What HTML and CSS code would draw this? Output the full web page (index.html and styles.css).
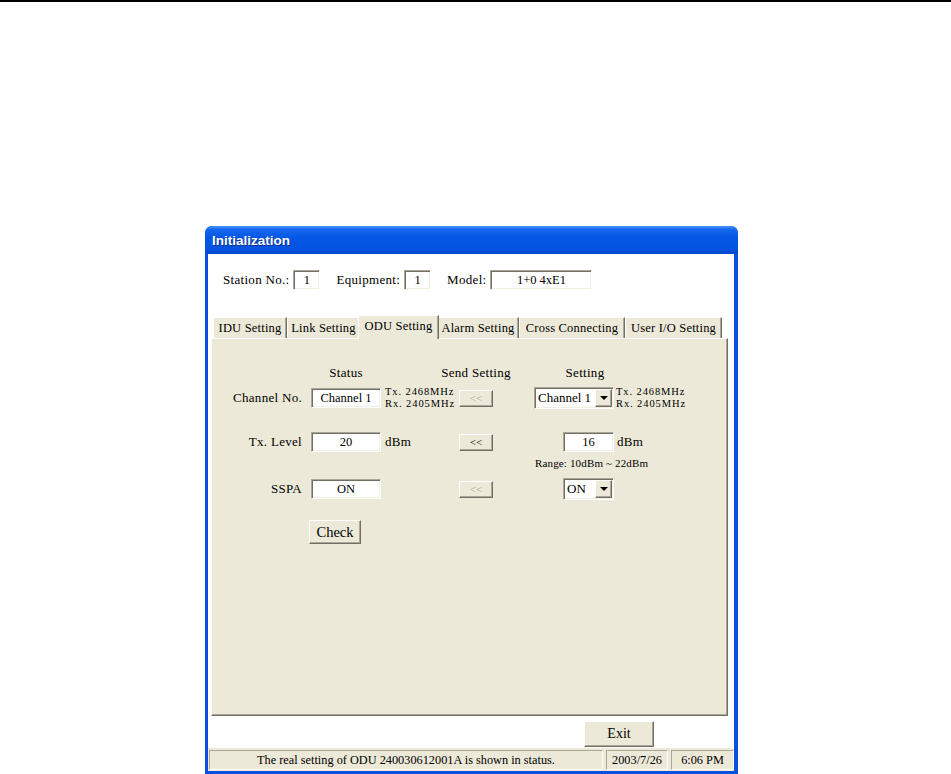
FILE: index.html
```html
<html>

<head>
	<title>Initialization</title>
	<link rel="stylesheet" href="styles.css">
</head>
<body>
	<div class="topline"></div>

	<div class="window">
		<div class="titlebar">Initialization</div>

		<div class="client">
			<div class="ids">
				<span class="lbl">Station No.:</span><span class="field f-station">1</span>
				<span class="lbl">Equipment:</span><span class="field f-equip">1</span>
				<span class="lbl">Model:</span><span class="field f-model">1+0 4xE1</span>
			</div>

			<div class="tabctl">
				<div class="tabs">
					<div class="tab t-idu">IDU Setting</div>
					<div class="tab t-link">Link Setting</div>
					<div class="tab t-odu active">ODU Setting</div>
					<div class="tab t-alarm">Alarm Setting</div>
					<div class="tab t-cross">Cross Connecting</div>
					<div class="tab t-user">User I/O Setting</div>
				</div>

				<div class="panel">
					<div class="heads">
						<div class="h-status">Status</div>
						<div class="h-send">Send Setting</div>
						<div class="h-setting">Setting</div>
					</div>

					<div class="row r-channel">
						<div class="cell-lbl">Channel No.</div>
						<div class="field sbox">Channel 1</div>
						<div class="info freq">Tx. 2468MHz<br>Rx. 2405MHz</div>
						<div class="btn send disabled">&lt;&lt;</div>
						<div class="set">
							<div class="combo c-channel"><span class="combo-text">Channel 1</span><span class="drop"></span></div>
						</div>
						<div class="after freq">Tx. 2468MHz<br>Rx. 2405MHz</div>
					</div>

					<div class="row r-level">
						<div class="cell-lbl">Tx. Level</div>
						<div class="field sbox">20</div>
						<div class="info">dBm</div>
						<div class="btn send">&lt;&lt;</div>
						<div class="set">
							<div class="field setbox">16</div>
						</div>
						<div class="after unit">dBm</div>
					</div>
					<div class="range">Range: 10dBm ~ 22dBm</div>

					<div class="row r-sspa">
						<div class="cell-lbl">SSPA</div>
						<div class="field sbox">ON</div>
						<div class="info"></div>
						<div class="btn send disabled">&lt;&lt;</div>
						<div class="set">
							<div class="combo c-on"><span class="combo-text">ON</span><span class="drop"></span></div>
						</div>
					</div>

					<div class="btn check">Check</div>
				</div>
			</div>

			<div class="foot">
				<div class="btn exit">Exit</div>
			</div>

			<div class="statusbar">
				<div class="sb sb-main">The real setting of ODU 240030612001A is shown in status.</div>
				<div class="sb sb-date">2003/7/26</div>
				<div class="sb sb-time">6:06 PM</div>
			</div>
		</div>
	</div>
</body>
</html>
```

FILE: styles.css
```css
body{
	margin: 0;
	background-color: #fff;
	font-family: "Liberation Serif", "Times New Roman", serif;
	font-size: 13px;
	color: #000;
}

.topline{
	height: 2px;
	background-color: #000;
}

/* window frame */
.window{
	width: 533px;
	height: 548px;
	margin: 224px 0 0 205px;
	background-color: #0b4fdc;
	border-radius: 7px 7px 0 0;
	display: flex;
	flex-direction: column;
	overflow: hidden;
}

.titlebar{
	height: 28px;
	flex: none;
	padding-left: 7px;
	line-height: 30px;
	color: #fff;
	font-family: "Liberation Sans", Arial, sans-serif;
	font-weight: bold;
	font-size: 13.5px;
	background: linear-gradient(to bottom, #4a95fa 0%, #1667ef 12%, #0558e6 40%, #0254e0 80%, #0348cf 100%);
	text-shadow: 1px 1px 0 #0a2e8c;
}

.client{
	flex: 1;
	margin: 0 4px 3px 3px;
	background-color: #fff;
	display: flex;
	flex-direction: column;
}

/* sunken text box */
.field{
	box-sizing: border-box;
	background-color: #fff;
	border-top: 1px solid #aca899;
	border-left: 1px solid #aca899;
	border-bottom: 1px solid #fff;
	border-right: 1px solid #fff;
	box-shadow: inset 1px 1px 0 #716f64, inset -1px -1px 0 #f1efe2;
	text-align: center;
	font-size: 12.5px;
	letter-spacing: 0;
}

/* raised button */
.btn{
	box-sizing: border-box;
	background-color: #ece9d8;
	border: 1px solid;
	border-color: #fff #716f64 #716f64 #fff;
	box-shadow: inset -1px -1px 0 #aca899;
	text-align: center;
}

.btn.disabled{
	color: #aca899;
}

.ids{
	display: flex;
	align-items: center;
	height: 20px;
	padding: 16px 0 0 15px;
	letter-spacing: 0.3px;
}

.ids .lbl{
	margin-right: 4px;
}

.ids .field{
	height: 20px;
	line-height: 18px;
	margin-right: 16px;
}

.f-station, .f-equip{
	width: 27px;
}

.f-model{
	width: 102px;
}

/* tabs */
.tabctl{
	margin: 24px 6px 0 3px;
}

.tabs{
	display: flex;
	align-items: flex-end;
	height: 24px;
	padding-left: 2px;
}

.tab{
	box-sizing: border-box;
	height: 21px;
	border-top: 1px solid #fff;
	border-left: 1px solid #fff;
	border-right: 1px solid #716f64;
	box-shadow: inset -1px 0 0 #aca899;
	background-color: #ece9d8;
	text-align: center;
	line-height: 20px;
	font-size: 12.5px;
	letter-spacing: 0.2px;
	white-space: nowrap;
}

.t-idu{ width: 74px; }
.t-link{ width: 73px; }
.t-alarm{ width: 82px; }
.t-cross{ width: 106px; }
.t-user{ width: 97px; }

.tab.active{
	width: 81px;
	height: 24px;
	margin: 0 -2px -1px;
	line-height: 20px;
	position: relative;
	z-index: 1;
}

.panel{
	box-sizing: border-box;
	height: 378px;
	background-color: #ece9d8;
	border-top: 1px solid #fff;
	border-left: 1px solid #fff;
	border-right: 1px solid #716f64;
	border-bottom: 1px solid #716f64;
	box-shadow: inset -1px -1px 0 #aca899;
	padding-top: 27px;
	letter-spacing: 0.3px;
}

.heads{
	display: flex;
	height: 14px;
	line-height: 14px;
	text-align: center;
}

.h-status{
	margin-left: 99px;
	width: 70px;
}

.h-send{
	margin-left: 56px;
	width: 78px;
	white-space: nowrap;
}

.h-setting{
	margin-left: 40px;
	width: 60px;
}

.row{
	display: flex;
	align-items: center;
}

.r-channel{
	height: 22px;
	margin-top: 7px;
}

.r-level{
	height: 20px;
	margin-top: 23px;
}

.r-sspa{
	height: 22px;
	margin-top: 8px;
}

.cell-lbl{
	width: 90px;
	text-align: right;
	white-space: nowrap;
}

.sbox{
	margin-left: 9px;
	width: 70px;
	height: 20px;
	line-height: 18px;
}

.info{
	box-sizing: border-box;
	width: 78px;
	padding-left: 4px;
	white-space: nowrap;
}

.freq{
	font-size: 10.5px;
	line-height: 12.5px;
	letter-spacing: 0.9px;
}

.send{
	width: 34px;
	height: 17px;
	line-height: 14px;
	font-size: 11px;
	letter-spacing: 0;
}

.set{
	margin-left: 41px;
	width: 80px;
	display: flex;
	justify-content: flex-end;
}

.after{
	padding-left: 2px;
	white-space: nowrap;
}

.unit{
	padding-left: 3px;
}

.setbox{
	width: 51px;
	height: 20px;
	line-height: 18px;
}

/* drop-down list */
.combo{
	box-sizing: border-box;
	display: flex;
	height: 22px;
	padding: 1px;
	background-color: #fff;
	border-top: 1px solid #aca899;
	border-left: 1px solid #aca899;
	border-bottom: 1px solid #fff;
	border-right: 1px solid #fff;
	box-shadow: inset 1px 1px 0 #716f64, inset -1px -1px 0 #f1efe2;
}

.c-channel{
	width: 80px;
}

.c-on{
	width: 51px;
}

.combo-text{
	flex: 1;
	padding-left: 2px;
	line-height: 18px;
	letter-spacing: 0;
	white-space: nowrap;
}

.drop{
	box-sizing: border-box;
	width: 17px;
	display: flex;
	align-items: center;
	justify-content: center;
	background-color: #ece9d8;
	border: 1px solid;
	border-color: #fff #716f64 #716f64 #fff;
	box-shadow: inset -1px -1px 0 #aca899;
}

.drop::after{
	content: "";
	width: 0;
	height: 0;
	border-top: 4px solid #000;
	border-left: 4px solid transparent;
	border-right: 4px solid transparent;
}

.range{
	margin: 4px 0 0 323px;
	height: 14px;
	line-height: 14px;
	font-size: 11px;
	letter-spacing: 0.15px;
}

.check{
	margin: 20px 0 0 97px;
	width: 52px;
	height: 24px;
	line-height: 22px;
	font-size: 14.5px;
	letter-spacing: 0;
}

/* bottom of the window */
.foot{
	height: 32px;
	box-sizing: border-box;
	padding: 5px 80px 0 0;
	display: flex;
	justify-content: flex-end;
	align-items: flex-start;
}

.exit{
	width: 70px;
	height: 26px;
	line-height: 24px;
	font-size: 14px;
}

.statusbar{
	height: 23px;
	box-sizing: border-box;
	display: flex;
	gap: 3px;
	padding: 2px 0 1px 1px;
	background-color: #ece9d8;
	font-size: 12.3px;
}

.sb{
	border: 1px solid;
	border-color: #aca899 #fff #fff #aca899;
	text-align: center;
	line-height: 18px;
	white-space: nowrap;
}

.sb-main{
	flex: 1;
}

.sb-date{
	width: 60px;
}

.sb-time{
	width: 61px;
}
```
